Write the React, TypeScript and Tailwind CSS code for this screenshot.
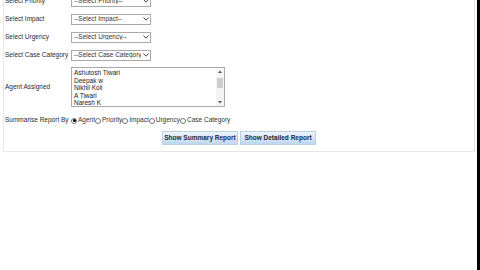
import React from "react"

const selects = [
  { label: "Select Priority", placeholder: "--Select Priority--" },
  { label: "Select Impact", placeholder: "--Select Impact--" },
  { label: "Select Urgency", placeholder: "--Select Urgency--" },
  { label: "Select Case Category", placeholder: "--Select Case Category--" },
]

const agents = ["Ashutosh Tiwari", "Deepak w", "Nikhil Koli", "A Tiwari", "Naresh K"]
const groups = ["Agent", "Priority", "Impact", "Urgency", "Case Category"]

function FakeSelect({ text }: { text: string }) {
  return (
    <div className="flex h-[11px] w-[80px] items-center border border-[#a9a9a9] bg-white">
      <span className="flex-1 overflow-hidden whitespace-nowrap pl-[2px] text-[6.5px] leading-none text-[#333]">
        {text}
      </span>
      <span className="flex h-full w-[9px] items-center justify-center">
        <svg width="6" height="4" viewBox="0 0 6 4">
          <path d="M0.5 0.5 L3 3.2 L5.5 0.5" fill="none" stroke="#444" strokeWidth="1" />
        </svg>
      </span>
    </div>
  )
}

function Radio({ checked }: { checked?: boolean }) {
  return (
    <span className="inline-flex h-[6px] w-[6px] items-center justify-center rounded-full border border-[#777] bg-white">
      {checked && <span className="h-[3px] w-[3px] rounded-full bg-black" />}
    </span>
  )
}

export default function App() {
  return (
    <div className="relative h-[270px] w-[480px] overflow-hidden bg-white font-['Liberation_Sans',Arial,sans-serif] text-[#2a2a2a]">
      <div className="absolute right-0 top-0 h-full w-[3px] bg-black" />
      <div className="-mt-[8px] ml-[3px] mr-[5px] border-b border-l border-r border-[#e6e6e6] pb-[6px]">
        {selects.map((s) => (
          <div key={s.label} className="flex h-[18px] items-center">
            <span className="w-[67px] pl-[1px] text-[6.5px] leading-none">{s.label}</span>
            <FakeSelect text={s.placeholder} />
          </div>
        ))}

        <div className="flex items-center pt-[3px]">
          <span className="w-[67px] pl-[1px] text-[6.5px] leading-none">Agent Assigned</span>
          <div className="flex h-[40px] w-[154px] border border-[#a9a9a9] bg-white">
            <div className="flex-1 pl-[2px] pt-[1px]">
              {agents.map((a) => (
                <div key={a} className="h-[7.5px] text-[6.5px] leading-[7.5px] text-[#222]">
                  {a}
                </div>
              ))}
            </div>
            <div className="flex w-[8px] flex-col bg-[#f4f4f4]">
              <div className="flex h-[7px] items-center justify-center">
                <svg width="4" height="3" viewBox="0 0 4 3">
                  <path d="M0 3 L2 0.5 L4 3 Z" fill="#555" />
                </svg>
              </div>
              <div className="mx-[1px] mt-[3px] h-[10px] bg-[#cdcdcd]" />
              <div className="flex-1" />
              <div className="flex h-[7px] items-center justify-center">
                <svg width="4" height="3" viewBox="0 0 4 3">
                  <path d="M0 0 L2 2.5 L4 0 Z" fill="#555" />
                </svg>
              </div>
            </div>
          </div>
        </div>

        <div className="flex h-[18px] items-center pt-[9px]">
          <span className="w-[67px] pl-[1px] text-[6.5px] leading-none">Summarise Report By</span>
          <div className="flex items-center text-[6.5px] leading-none">
            {groups.map((g, i) => (
              <label key={g} className="flex items-center gap-[1px]">
                <Radio checked={i === 0} />
                <span className="text-[#333]">{g}</span>
              </label>
            ))}
          </div>
        </div>

        <div className="flex justify-center gap-[2px] pt-[6px]">
          <button className="h-[14px] w-[76px] border border-[#bcd0e4] bg-gradient-to-b from-[#eef5fc] to-[#bfd7f0] text-[6.5px] font-bold text-[#1a2a44]">
            Show Summary Report
          </button>
          <button className="h-[14px] w-[76px] border border-[#bcd0e4] bg-gradient-to-b from-[#eef5fc] to-[#bfd7f0] text-[6.5px] font-bold text-[#1a2a44]">
            Show Detailed Report
          </button>
        </div>
      </div>
    </div>
  )
}
